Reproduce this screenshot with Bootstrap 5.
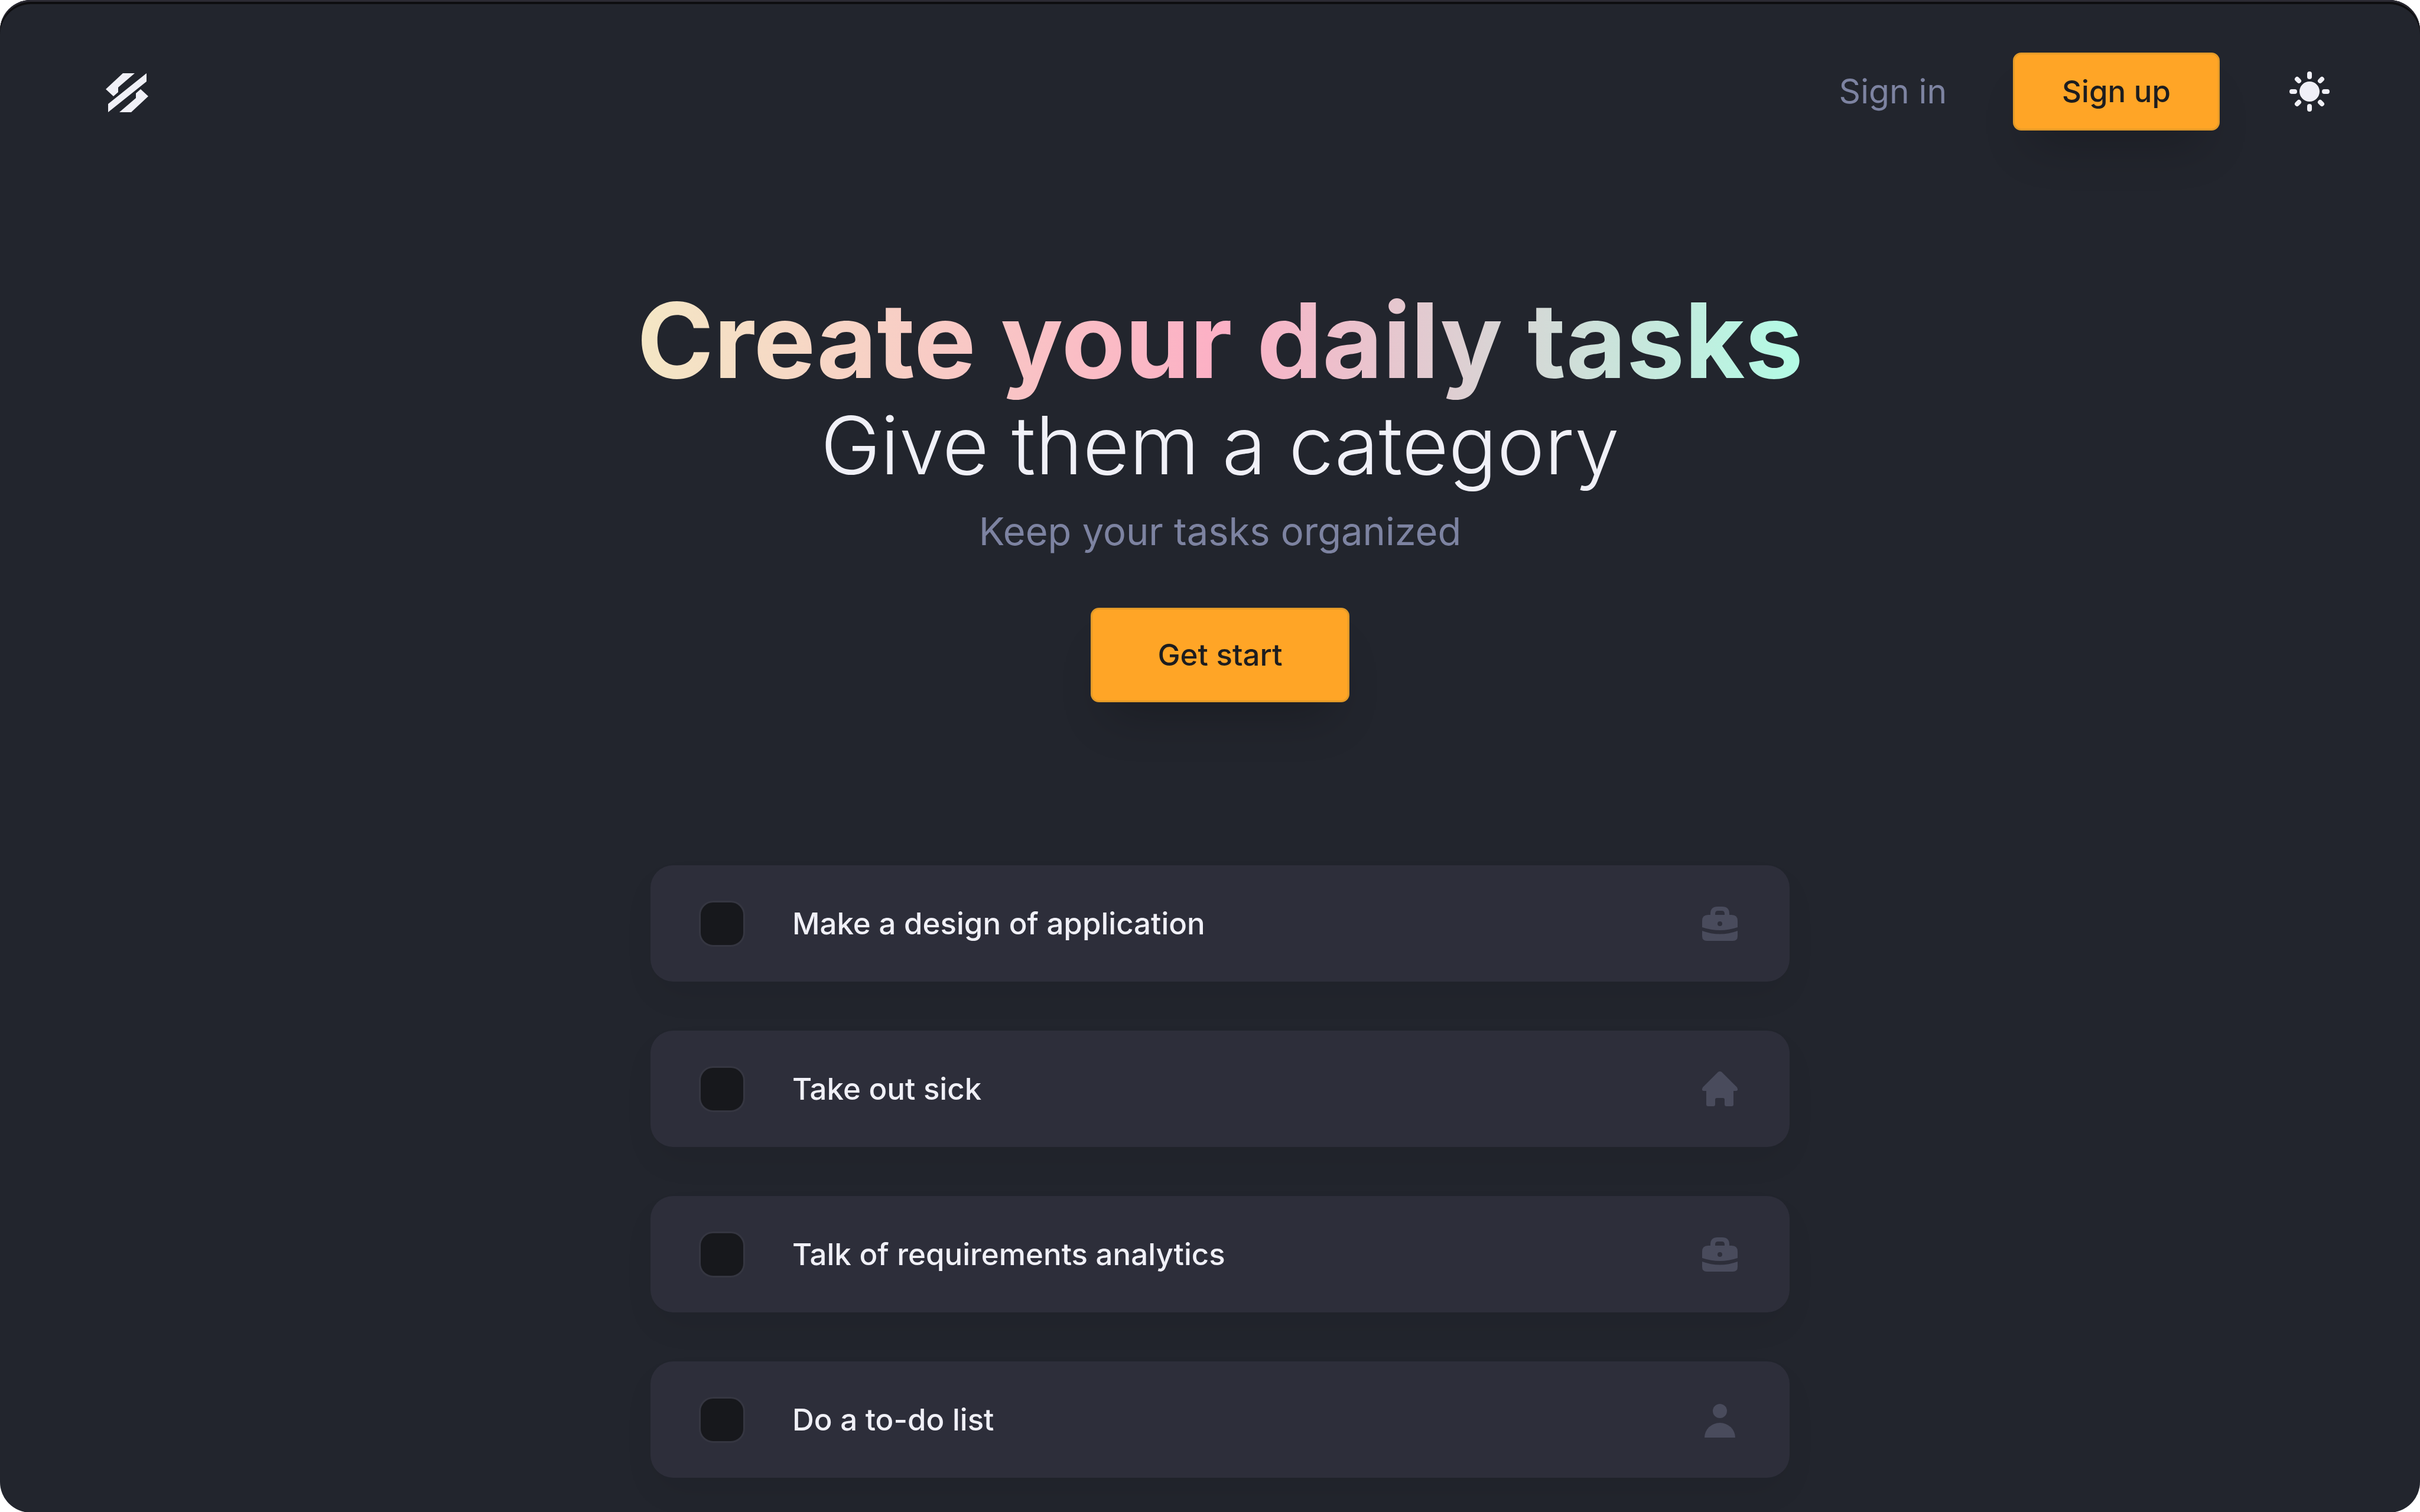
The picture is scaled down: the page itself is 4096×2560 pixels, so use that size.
<!DOCTYPE html>
<html lang="en">
<head>
<meta charset="utf-8">
<meta name="viewport" content="width=device-width, initial-scale=1">
<title>Daily tasks</title>
<link href="https://cdn.jsdelivr.net/npm/bootstrap@5.3.0/dist/css/bootstrap.min.css" rel="stylesheet">
<style>
  body { background: #fff; font-family: Inter, "Open Sans", sans-serif; }
  .app-shell {
    background: #22252d;
    border-radius: 52px;
    box-shadow: inset 0 3px #2b2a33, inset 0 7px #0e0e10;
    color: #f0f0f7;
    padding-bottom: 59px;
  }
  .top-nav { padding: 89px 147px 0 175px; }
  .brand-mark, .theme-toggle { width: 80px; height: 80px; color: #f0f0f7; }
  .nav-actions { gap: 112px; }
  .signin-link { color: #7d83a1; font-size: 57px; line-height: 80px; }
  .signin-link:hover { color: #f0f0f7; }
  .btn-amber {
    --bs-btn-color: #1d1d1f;
    --bs-btn-bg: #ffa526;
    --bs-btn-border-color: #e39a28;
    --bs-btn-hover-color: #1d1d1f;
    --bs-btn-hover-bg: #ffb347;
    --bs-btn-hover-border-color: #e39a28;
    --bs-btn-border-width: 3px;
    --bs-btn-border-radius: 14px;
    --bs-btn-font-size: 51px;
    --bs-btn-font-weight: 500;
    --bs-btn-line-height: 60px;
    --bs-btn-padding-x: 80px;
    --bs-btn-padding-y: 33px;
    box-shadow: 0 52px 80px -30px rgba(0, 0, 0, .22);
  }
  .btn-amber-lg { --bs-btn-padding-x: 110px; --bs-btn-padding-y: 47px; }
  .page-body { padding-left: 34px; }
  .hero { padding-top: 267px; }
  .hero-title { font-size: 176px; line-height: 176px; }
  .hero-title span {
    background: linear-gradient(90deg, #f4e7c5, #fcb0c5 50%, #b2fce5);
    -webkit-background-clip: text;
    background-clip: text;
    color: transparent;
  }
  .hero-subtitle { font-size: 136px; line-height: 180px; }
  .hero-note { color: #7d83a1; font-size: 65px; line-height: 112px; margin-bottom: 73px; }
  .task-list { max-width: 1928px; margin-top: 276px; gap: 83px; }
  .task-item {
    background: #2d2e3a;
    border-radius: 38px;
    box-shadow: 0 28px 60px -10px rgba(0, 0, 0, .07);
    gap: 80px;
    height: 197px;
    padding: 0 82px;
  }
  .task-item .form-check-input {
    width: 78px;
    height: 78px;
    margin: 0;
    background-color: #17181c;
    border: 3px solid #353641;
    border-radius: 24px;
  }
  .task-item label { font-size: 51px; line-height: 64px; }
  .task-icon { width: 72px; height: 72px; color: #494b5c; }
</style>
</head>
<body>
<div class="app-shell min-vh-100">
  <header class="top-nav d-flex align-items-center justify-content-between">
    <a href="#" class="d-flex" aria-label="Home">
      <svg class="brand-mark" viewBox="0 -2 80 80" fill="currentColor" aria-hidden="true">
        <path d="M73 7v14L8 73V59z"/>
        <path d="M33 7h20L25 31v8l-8 7L4 34z"/>
        <path d="M47 73H27l28-24v-8l8-7 13 12z"/>
      </svg>
    </a>
    <nav class="nav-actions d-flex align-items-center">
      <a href="#" class="signin-link text-decoration-none">Sign in</a>
      <button type="button" class="btn btn-amber">Sign up</button>
      <button type="button" class="theme-toggle btn p-0 border-0 d-flex" aria-label="Toggle theme">
        <svg width="80" height="80" viewBox="-40 -40 80 80" fill="#f0f0f7" stroke="#f0f0f7" aria-hidden="true">
          <circle r="17" stroke="none"/>
          <path stroke-width="8" stroke-linecap="round" d="M0-30v5M0 30V25M-30 0h5M30 0H25M-21-21l3 3M21-21l-3 3M-21 21l3-3M21 21l-3-3"/>
        </svg>
      </button>
    </nav>
  </header>

  <main class="page-body">
    <section class="hero text-center">
      <h1 class="hero-title fw-bold mb-0"><span>Create your daily tasks</span></h1>
      <h2 class="hero-subtitle fw-light mb-0">Give them a category</h2>
      <p class="hero-note">Keep your tasks organized</p>
      <button type="button" class="btn btn-amber btn-amber-lg">Get start</button>
    </section>

    <ul class="task-list list-unstyled d-flex flex-column mx-auto mb-0">
      <li class="task-item d-flex align-items-center">
        <input class="form-check-input" type="checkbox" id="task1">
        <label class="flex-grow-1 fw-medium" for="task1">Make a design of application</label>
        <svg class="task-icon" viewBox="0 0 72 72" fill="currentColor" aria-hidden="true"><path id="case" fill-rule="evenodd" d="M20 21v-2Q20 7 32 7h8q12 0 12 12v2h4q10 0 10 10v11Q36 52 6 42V31q0-10 10-10zm8 0h16v-2q0-5-5-5h-6q-5 0-5 5zm8 11a4 4 0 1 0 0 8 4 4 0 0 0 0-8zM6 48q30 11 60 0v9q0 8-8 8H14q-8 0-8-8z"/></svg>
      </li>
      <li class="task-item d-flex align-items-center">
        <input class="form-check-input" type="checkbox" id="task2">
        <label class="flex-grow-1 fw-medium" for="task2">Take out sick</label>
        <svg class="task-icon" viewBox="0 0 72 72" fill="currentColor" aria-hidden="true"><path d="M33 7q3-2 6 0l26 26q3 6-2 6h-4v23q0 3-3 3h-9q-3 0-3-3v-8q0-3-3-3H31q-3 0-3 3v8q0 3-3 3h-9q-3 0-3-3V39H9q-5 0-2-6z"/></svg>
      </li>
      <li class="task-item d-flex align-items-center">
        <input class="form-check-input" type="checkbox" id="task3">
        <label class="flex-grow-1 fw-medium" for="task3">Talk of requirements analytics</label>
        <svg class="task-icon" viewBox="0 0 72 72" fill="currentColor" aria-hidden="true"><use href="#case"/></svg>
      </li>
      <li class="task-item d-flex align-items-center">
        <input class="form-check-input" type="checkbox" id="task4">
        <label class="flex-grow-1 fw-medium" for="task4">Do a to-do list</label>
        <svg class="task-icon" viewBox="0 0 72 72" fill="currentColor" aria-hidden="true"><circle cx="36" cy="21" r="12"/><path d="M10 66a26 25 0 0 1 52 0z"/></svg>
      </li>
    </ul>
  </main>
</div>
<script src="https://cdn.jsdelivr.net/npm/bootstrap@5.3.0/dist/js/bootstrap.bundle.min.js"></script>
</body>
</html>
